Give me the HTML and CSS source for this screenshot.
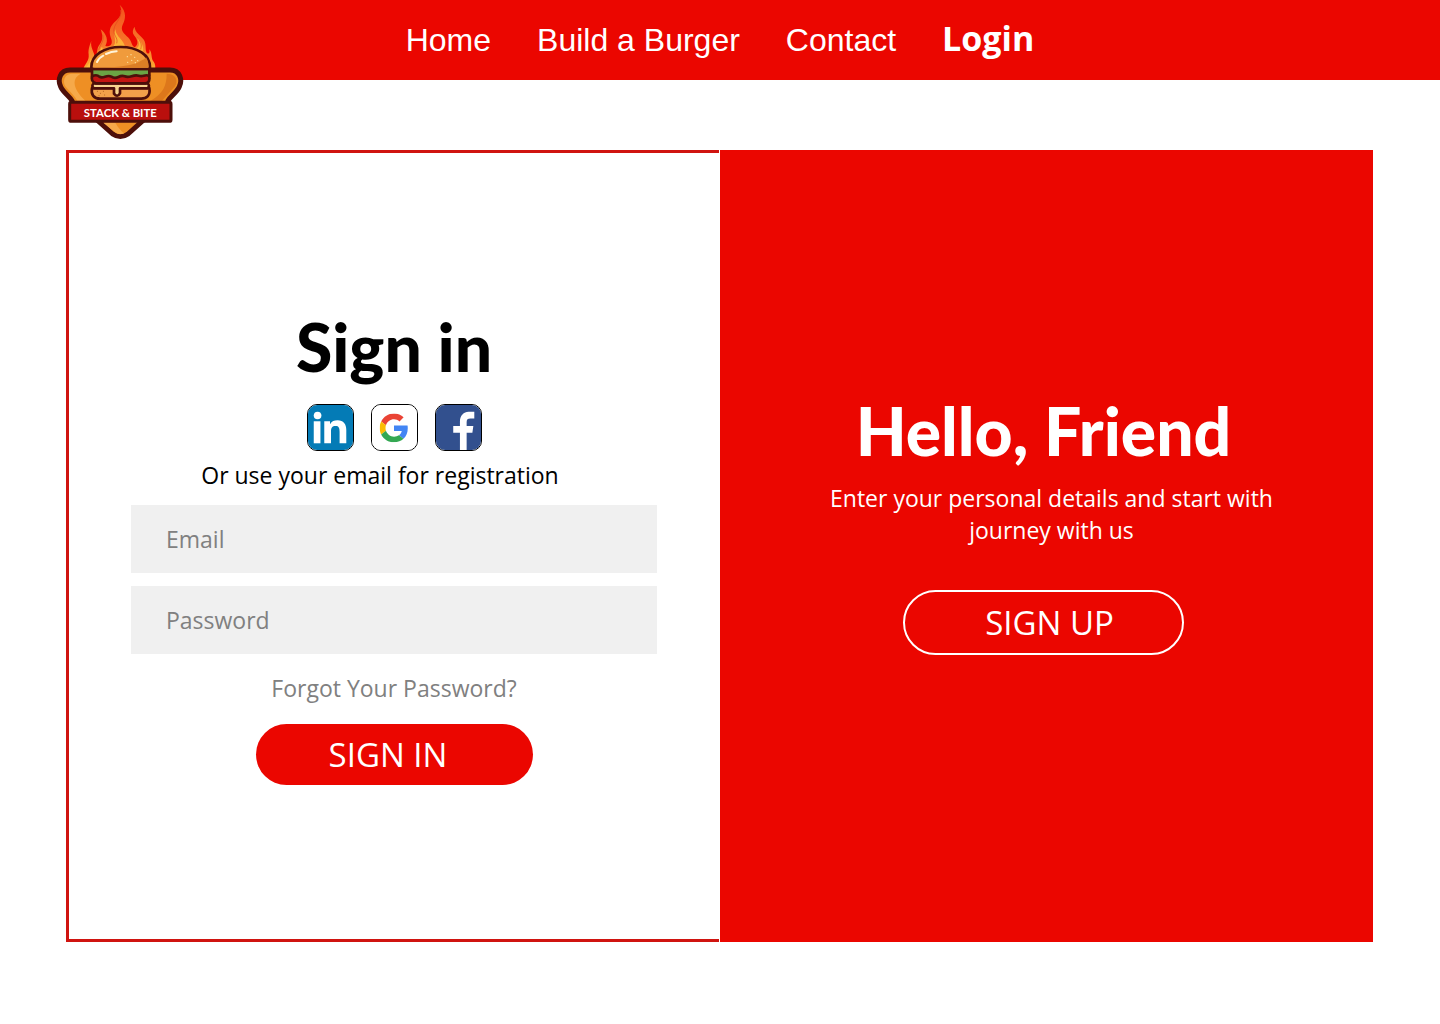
FILE: index.html
```html
<!DOCTYPE html>
<html lang="en">
<head>
    <meta charset="UTF-8">
    <meta name="viewport" content="width=device-width, initial-scale=1.0">
    <title>Stack &amp; Bite - Login</title>
    <link rel="stylesheet" href="styles.css">
</head>
<body>
    <header class="header">
        <a href="#" class="logo" aria-label="Stack &amp; Bite">
            <svg viewBox="0 0 420 435" width="140" height="145">
                <defs>
                    <linearGradient id="flame" x1="0" y1="0" x2="0" y2="1">
                        <stop offset="0" stop-color="#f4511c"/>
                        <stop offset="0.6" stop-color="#f7762a"/>
                        <stop offset="1" stop-color="#fbb034"/>
                    </linearGradient>
                </defs>
                <!-- flames -->
                <path fill="url(#flame)" d="M98 212 C104 190 118 184 116 164 C114 146 120 134 124 122 C120 144 134 156 134 172 C146 156 138 146 150 132 C160 118 158 104 152 88 C170 102 176 122 166 138 C184 142 190 130 182 112 C174 88 184 74 198 62 C214 48 218 34 209 14 C232 36 226 58 218 74 C210 92 222 100 234 112 C246 124 244 138 254 142 C268 132 262 118 252 106 C246 98 248 88 254 80 C254 98 274 106 282 120 C290 134 284 146 290 158 C296 164 300 160 298 148 C308 160 302 174 310 184 C316 192 318 202 314 212 Z"/>
                <path fill="#fcc23c" opacity="0.8" d="M186 142 C206 128 186 108 196 88 C198 112 222 118 226 144 Z M256 148 C276 136 262 122 262 112 C274 124 284 142 278 160 Z M136 176 C152 160 148 148 156 140 C162 152 158 160 150 170 Z M104 204 C118 196 120 182 122 174 L124 206 Z"/>
                <path fill="none" stroke="#e04a1c" stroke-width="2" d="M211 30 C220 56 186 72 192 98 C196 112 204 116 200 130 M262 112 C274 128 276 134 272 148 M158 104 C164 124 150 132 146 150"/>
                <!-- badge -->
                <path fill="#ee8f24" stroke="#4d0f0a" stroke-width="15" stroke-linejoin="round" d="M60 210 H360 C390 210 398 240 388 260 C380 278 362 288 354 302 L338 350 H292 L234 402 C220 412 202 412 188 402 L130 350 H84 L66 302 C58 288 40 278 32 260 C22 240 30 210 60 210 Z"/>
                <path fill="#f6a94a" d="M66 221 H92 C60 238 74 272 106 302 H82 C66 274 42 264 42 246 C42 232 50 221 66 221 Z M160 368 H196 C204 384 214 392 222 400 C214 404 202 402 194 396 Z"/>
                <path fill="#dd771b" d="M350 221 C384 222 386 250 370 264 L336 302 H302 C340 280 350 256 350 221 Z"/>
                <!-- burger -->
                <g stroke="#4d0f0a" stroke-width="8" stroke-linejoin="round">
                    <path fill="#f2a04a" d="M126 264 H298 C302 286 290 296 274 296 H150 C132 296 122 284 126 264 Z"/>
                    <path fill="#f8d48e" d="M132 250 H292 Q302 258 292 265 H210 V280 Q202 294 192 281 V265 H132 Q122 258 132 250 Z"/>
                    <path fill="#c41512" d="M128 222 H296 Q304 248 286 250 H138 Q120 246 128 222 Z"/>
                    <path fill="#6ba444" d="M126 207 H298 V227 C282 222 280 232 266 227 C248 222 240 236 224 229 C206 222 202 242 184 230 C170 222 160 238 148 230 Q140 222 126 229 Z"/>
                    <path fill="#f09b3c" d="M124 202 C124 164 164 141 212 141 C262 141 300 164 300 202 Q300 207 292 207 H132 Q124 207 124 202 Z"/>
                </g>
                <path fill="#dc7e25" d="M134 202 C168 204 230 200 262 188 C280 180 286 176 288 172 C294 182 297 194 295 203 H136 Z"/>
                <path fill="none" stroke="#fff3d8" stroke-width="6" stroke-linecap="round" d="M141 186 C146 176 153 170 160 167 M168 162 C180 156 190 154 200 154"/>
                <path fill="none" stroke="#fce0a0" stroke-width="4" stroke-linecap="round" d="M232 170 h.1 M243 164 h.1 M254 172 h.1 M263 182 h.1 M245 181 h.1 M233 187 h.1 M256 188 h.1"/>
                <path fill="none" stroke="#a9591b" stroke-width="3" stroke-linecap="round" d="M142 274 h.1 M151 280 h.1 M160 274 h.1 M147 287 h.1 M164 285 h.1"/>
                <!-- ribbon -->
                <rect x="59" y="307" width="304" height="57" rx="5" fill="#b90f0d" stroke="#4d0f0a" stroke-width="9"/>
                <text x="211" y="351" class="logo-text" text-anchor="middle">STACK &amp; BITE</text>
            </svg>
        </a>
        <nav class="nav">
            <a href="#">Home</a>
            <a href="#">Build a Burger</a>
            <a href="#">Contact</a>
            <a href="#" class="active">Login</a>
        </nav>
    </header>

    <main class="container">
        <form class="panel sign-in">
            <h1>Sign in</h1>
            <div class="social">
                <a href="#" class="social-link" aria-label="LinkedIn">
                    <svg viewBox="0 0 47 47">
                        <rect width="47" height="47" fill="#047bb6"/>
                        <circle cx="10" cy="11" r="4" fill="#fff"/>
                        <rect x="6" y="17" width="7" height="23" fill="#fff"/>
                        <path fill="#fff" d="M17 17 H23 V20 C25 17 27 16 31 16 C37 16 40 20 40 26 V40 H33 V28 C33 24 32 22 29 22 C25 22 24 24 24 28 V40 H17 Z"/>
                    </svg>
                </a>
                <a href="#" class="social-link" aria-label="Google">
                    <svg viewBox="0 0 47 47">
                        <rect width="47" height="47" fill="#fff"/>
                        <svg x="8" y="9" width="30" height="30" viewBox="0 0 48 48">
                            <path fill="#ea4335" d="M24 9.5c3.54 0 6.71 1.22 9.21 3.6l6.85-6.85C35.9 2.38 30.47 0 24 0 14.62 0 6.51 5.38 2.56 13.22l7.98 6.19C12.43 13.72 17.74 9.5 24 9.5z"/>
                            <path fill="#4285f4" d="M46.98 24.55c0-1.57-.15-3.09-.38-4.55H24v9.02h12.94c-.58 2.96-2.26 5.48-4.78 7.18l7.73 6c4.51-4.18 7.09-10.36 7.09-17.65z"/>
                            <path fill="#fbbc05" d="M10.53 28.59c-.48-1.45-.76-2.99-.76-4.59s.27-3.14.76-4.59l-7.98-6.19C.92 16.46 0 20.12 0 24c0 3.88.92 7.54 2.56 10.78l7.97-6.19z"/>
                            <path fill="#34a853" d="M24 48c6.48 0 11.93-2.13 15.89-5.81l-7.73-6c-2.15 1.45-4.92 2.3-8.16 2.3-6.26 0-11.57-4.22-13.47-9.91l-7.98 6.19C6.51 42.62 14.62 48 24 48z"/>
                        </svg>
                    </svg>
                </a>
                <a href="#" class="social-link" aria-label="Facebook">
                    <svg viewBox="0 0 47 47">
                        <rect width="47" height="47" fill="#32508e"/>
                        <path fill="#fff" d="M25 47 V29 H18 V22 H25 V17 C25 11 29 7 34 7 H40 V14 H36 C33 14 32 15 32 18 V22 H39 L38 29 H32 V47 Z"/>
                    </svg>
                </a>
            </div>
            <p class="hint">Or use your email for registration</p>
            <div class="fields">
                <input type="email" id="email" aria-label="Email" placeholder="Email">
                <input type="password" id="password" aria-label="Password" placeholder="Password">
            </div>
            <a href="#" class="forgot">Forgot Your Password?</a>
            <button type="submit" class="btn btn-primary">SIGN IN</button>
        </form>

        <section class="panel sign-up">
            <h2>Hello, Friend</h2>
            <p>Enter your personal details and start with journey with us</p>
            <button type="button" class="btn btn-outline">SIGN UP</button>
        </section>
    </main>
</body>
</html>
```
FILE: styles.css
```css
:root {
    --red: #eb0600;
    --border-red: #d01410;
    --field-bg: #f0f0f0;
    --grey: #808080;
}

* {
    margin: 0;
    padding: 0;
    box-sizing: border-box;
}

body {
    background-color: #fff;
    color: #000;
    font-family: "Open Sans", "Noto Sans", sans-serif;
    font-size: 23px;
    line-height: 32px;
}

a {
    color: inherit;
    text-decoration: none;
}

.header {
    position: relative;
    display: flex;
    justify-content: center;
    height: 80px;
    background-color: var(--red);
    color: #fff;
}

.logo {
    position: absolute;
    top: 0;
    left: 50px;
}

.logo-text {
    font-family: Lato, sans-serif;
    font-size: 34px;
    font-weight: 700;
    fill: #fff;
}

.nav {
    display: flex;
    align-items: baseline;
    gap: 46px;
    font-family: "Liberation Sans", Arial, sans-serif;
    font-size: 32px;
    line-height: 76px;
}

.nav .active {
    font-family: "Open Sans", "Noto Sans", sans-serif;
    font-size: 34px;
    font-weight: 700;
}

.container {
    display: grid;
    grid-template-columns: 1fr 1fr;
    gap: 1px;
    margin: 70px 67px 82px 66px;
}

.panel {
    display: flex;
    flex-direction: column;
    align-items: center;
}

h1,
h2 {
    font-family: Lato, sans-serif;
    font-size: 66px;
    font-weight: 900;
    line-height: 80px;
}

.sign-in {
    padding: 154px 62px;
    border: 3px solid var(--border-red);
    border-right: none;
}

.social {
    display: flex;
    gap: 17px;
    margin-top: 17px;
}

.social-link {
    width: 47px;
    height: 47px;
    border: 1px solid #000;
    border-radius: 10px;
    overflow: hidden;
}

.social-link svg {
    display: block;
}

.hint {
    margin: 8px 0 14px;
    padding-right: 28px;
}

.fields {
    display: flex;
    flex-direction: column;
    gap: 13px;
    width: 100%;
}

input {
    width: 100%;
    height: 68px;
    padding: 0 35px;
    border: none;
    background-color: var(--field-bg);
    font: inherit;
}

input::placeholder {
    color: var(--grey);
    opacity: 1;
}

.forgot {
    margin: 18px 0 20px;
    color: var(--grey);
}

.btn {
    border-radius: 33px;
    color: #fff;
    font-family: inherit;
    font-size: 33px;
    cursor: pointer;
}

.btn-primary {
    width: 277px;
    height: 61px;
    padding-right: 12px;
    border: none;
    background-color: var(--red);
}

.sign-up {
    padding: 241px 90px 0 84px;
    background-color: var(--red);
    color: #fff;
    text-align: center;
}

.sign-up p {
    margin: 11px 0 44px;
    padding-left: 16px;
}

.btn-outline {
    width: 281px;
    height: 65px;
    padding-left: 12px;
    border: 2px solid #fff;
    background-color: transparent;
}

@media (max-width: 900px) {
    .container {
        grid-template-columns: 1fr;
    }

    .sign-up {
        padding: 80px 40px;
    }
}
```
